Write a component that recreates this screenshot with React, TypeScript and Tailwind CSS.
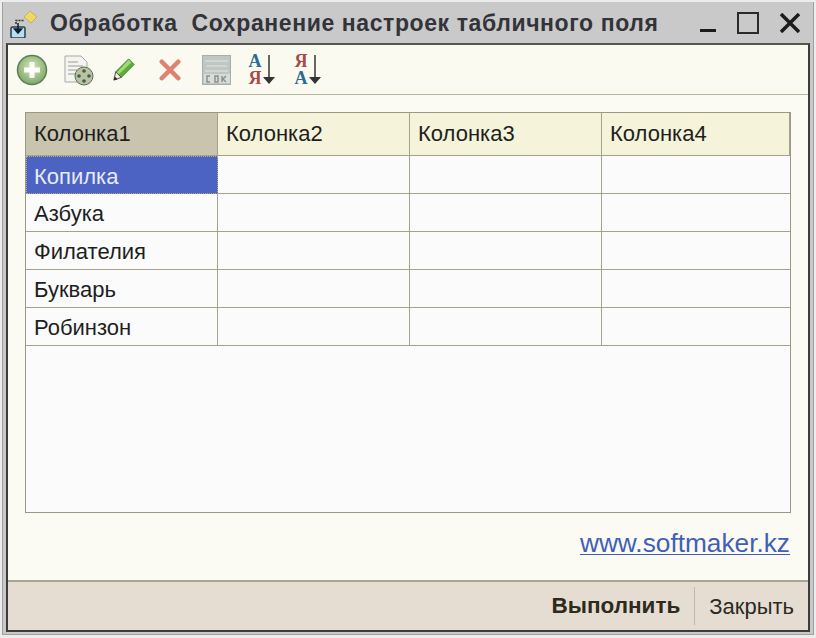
const font = { fontFamily: '"Liberation Sans", Arial, sans-serif' };

const columns = ["Колонка1", "Колонка2", "Колонка3", "Колонка4"];
const rows = ["Копилка", "Азбука", "Филателия", "Букварь", "Робинзон"];

function WindowIcon() {
  return (
    <svg width="30" height="30" viewBox="0 0 30 30">
      <path d="M21 3l7 6-6 6-7-6z" fill="#f0d868" stroke="#c8b050" />
      <path d="M7 16v-3.500h8" fill="none" stroke="#333" strokeWidth="1.500" strokeDasharray="2 1" />
      <rect x="2" y="19" width="14" height="11" rx="1.500" fill="#bcdcf0" stroke="#20405a" strokeWidth="1.500" />
      <path d="M9 15v8M5.500 21l3.500 4 3.500-4z" fill="#10202c" stroke="#10202c" strokeWidth="1.500" />
    </svg>
  );
}

function AddIcon() {
  return (
    <svg width="32" height="32" viewBox="0 0 32 32">
      <defs>
        <radialGradient id="addFill" cx="50%" cy="40%" r="60%">
          <stop offset="0%" stopColor="#d3e6b8" />
          <stop offset="100%" stopColor="#7ea868" />
        </radialGradient>
      </defs>
      <circle cx="16" cy="16" r="14.500" fill="url(#addFill)" stroke="#5c7e58" strokeWidth="1.500" />
      <path d="M16 8v16M8 16h16" stroke="#fff" strokeWidth="5" />
    </svg>
  );
}

function DocumentIcon() {
  return (
    <svg width="32" height="32" viewBox="0 0 32 32">
      <path d="M2 2h16l6 6v20H2z" fill="#f4f4f0" stroke="#a8a8a8" />
      <path d="M5 8h10M5 12h15M5 16h9M5 20h7" stroke="#9a9a9a" />
      <circle cx="21" cy="22" r="9" fill="#b6c4a4" stroke="#5c6a50" />
      <circle cx="21" cy="17" r="1.800" fill="#4e5a44" />
      <circle cx="16" cy="22" r="1.800" fill="#4e5a44" />
      <circle cx="26" cy="22" r="1.800" fill="#4e5a44" />
      <circle cx="21" cy="27" r="1.800" fill="#4e5a44" />
    </svg>
  );
}

function PencilIcon() {
  return (
    <svg width="24" height="26" viewBox="0 0 26 28">
      <path d="M18 2l6 6L10 22l-6-6z" fill="#5cae3c" stroke="#3c7c2c" />
      <path d="M18 3l3 3L7 19l-2-2z" fill="#a4d878" />
      <path d="M4 16l6 6-8 3z" fill="#f0eee0" stroke="#444" />
      <path d="M2 25l1-4 3 3z" fill="#222" />
    </svg>
  );
}

function DeleteIcon() {
  return (
    <svg width="22" height="22" viewBox="0 0 24 24">
      <path d="M3 3l18 18M21 3L3 21" stroke="#e08070" strokeWidth="5" strokeLinecap="round" />
    </svg>
  );
}

function PanelIcon() {
  return (
    <svg width="30" height="30" viewBox="0 0 30 30">
      <rect x="0.500" y="0.500" width="28" height="29" fill="#c0c6c2" stroke="#a8aeaa" />
      <path d="M3 6h23M5 11h20M3 16h23" stroke="#e4e8e4" />
      <rect x="2" y="19" width="26" height="9" fill="#d8dcd8" />
      <path d="M8 21h-3v6h3M13 21h3v6h-3zM20 21v6M24 21l-3 3 3 3" fill="none" stroke="#8a928e" strokeWidth="1.500" />
    </svg>
  );
}

function SortIcon({ top, bottom, topColor, bottomColor }: { top: string; bottom: string; topColor: string; bottomColor: string }) {
  return (
    <svg className="overflow-visible" width="29" height="34" viewBox="0 0 29 34" style={{ fontFamily: '"Liberation Serif", serif' }}>
      <text x="8" y="14" textAnchor="middle" fontSize="18" fontWeight="bold" fill={topColor}>{top}</text>
      <text x="8" y="31" textAnchor="middle" fontSize="18" fontWeight="bold" fill={bottomColor}>{bottom}</text>
      <path d="M22 2v27" stroke="#333" strokeWidth="1.500" />
      <path d="M16 24h12l-6 7z" fill="#333" />
    </svg>
  );
}

export default function App() {
  return (
    <div className="w-[816px] h-[638px] bg-[#ececec] pt-[2px] px-[2px] pb-[3px] overflow-hidden" style={font}>
      <div className="h-full border-x border-b border-[#a0a0a0] bg-[#c9c9c9] flex flex-col">
        {/* заголовок окна */}
        <div className="h-[42px] flex items-center pl-[6px] pr-[13px] shrink-0">
          <WindowIcon />
          <span className="ml-[11px] text-[23px] font-bold text-[#33333a] tracking-[0.6px] whitespace-pre">
            Обработка  Сохранение настроек табличного поля
          </span>
          <div className="ml-auto flex items-center">
            <div className="w-[16px] h-[3px] bg-[#1c1c1c] mt-[15px]" />
            <div className="ml-[21px] w-[22px] h-[22px] border-2 border-[#2a2a2a]" />
            <svg className="ml-[21px]" width="20" height="20" viewBox="0 0 20 20">
              <path d="M1 1l18 18M19 1L1 19" stroke="#1c1c1c" strokeWidth="3.500" />
            </svg>
          </div>
        </div>

        <div className="flex-1 mx-[3px] mb-[2px] border-2 border-[#3c3c3c] border-t-[#55554f] bg-[#fbfbf3] flex flex-col min-h-0 -mt-[1px]">
          {/* панель команд */}
          <div className="h-[50px] shrink-0 border-b border-[#b5b59a] flex items-center pl-[8px] bg-[#fafaf0]">
            <AddIcon />
            <div className="ml-[15px]"><DocumentIcon /></div>
            <div className="ml-[17px]"><PencilIcon /></div>
            <div className="ml-[23px]"><DeleteIcon /></div>
            <div className="ml-[21px]"><PanelIcon /></div>
            <div className="ml-[15px]"><SortIcon top="A" bottom="Я" topColor="#2a6c92" bottomColor="#a84a48" /></div>
            <div className="ml-[17px]"><SortIcon top="Я" bottom="A" topColor="#a84a48" bottomColor="#2a6c92" /></div>
          </div>

          {/* табличное поле */}
          <div className="mt-[17px] mx-[17px] h-[401px] shrink-0 border border-[#9a9a84] bg-[#fbfbfb]">
            <div className="grid grid-cols-[192px_192px_192px_188px] text-[22px] text-[#1e1e1e] leading-none">
              {columns.map((name, i) => (
                <div
                  key={name}
                  className={`h-[43px] flex items-center pl-[8px] border-b border-r border-[#a3a38a] last:border-r-0 ${i === 0 ? "bg-[#c8c4ae]" : "bg-[#f5f3d9]"}`}
                >
                  {name}
                </div>
              ))}
              {rows.map((name, r) =>
                columns.map((col, c) => (
                  <div
                    key={name + col}
                    className={`h-[38px] flex items-center pt-[3px] border-b border-r border-[#a3a38a] ${
                      c === 3 ? "border-r-0" : ""
                    } ${r === 0 && c === 0 ? "pl-[7px] bg-[#4d63c4] text-[#e6ecf8] border border-dotted border-[#b0ac90]" : "pl-[8px]"}`}
                  >
                    {c === 0 ? name : ""}
                  </div>
                ))
              )}
            </div>
          </div>

          <div className="flex-1 flex justify-end items-start pr-[18px] pt-[14px]">
            <span className="text-[26.250px] leading-[32px] text-[#3f5fb8] underline underline-offset-2 decoration-1">www.softmaker.kz</span>
          </div>

          {/* нижняя панель */}
          <div className="h-[50px] shrink-0 border-t-2 border-[#a5a590] bg-[#e5ddd2] flex items-center justify-end pr-[14px] text-[22px] text-[#2a2a24]">
            <span className="font-bold text-[22.500px] text-[#2e2a1c]">Выполнить</span>
            <div className="w-px h-[38px] bg-[#c0b8a8] mx-[14px]" />
            <span>Закрыть</span>
          </div>
        </div>
      </div>
    </div>
  );
}
